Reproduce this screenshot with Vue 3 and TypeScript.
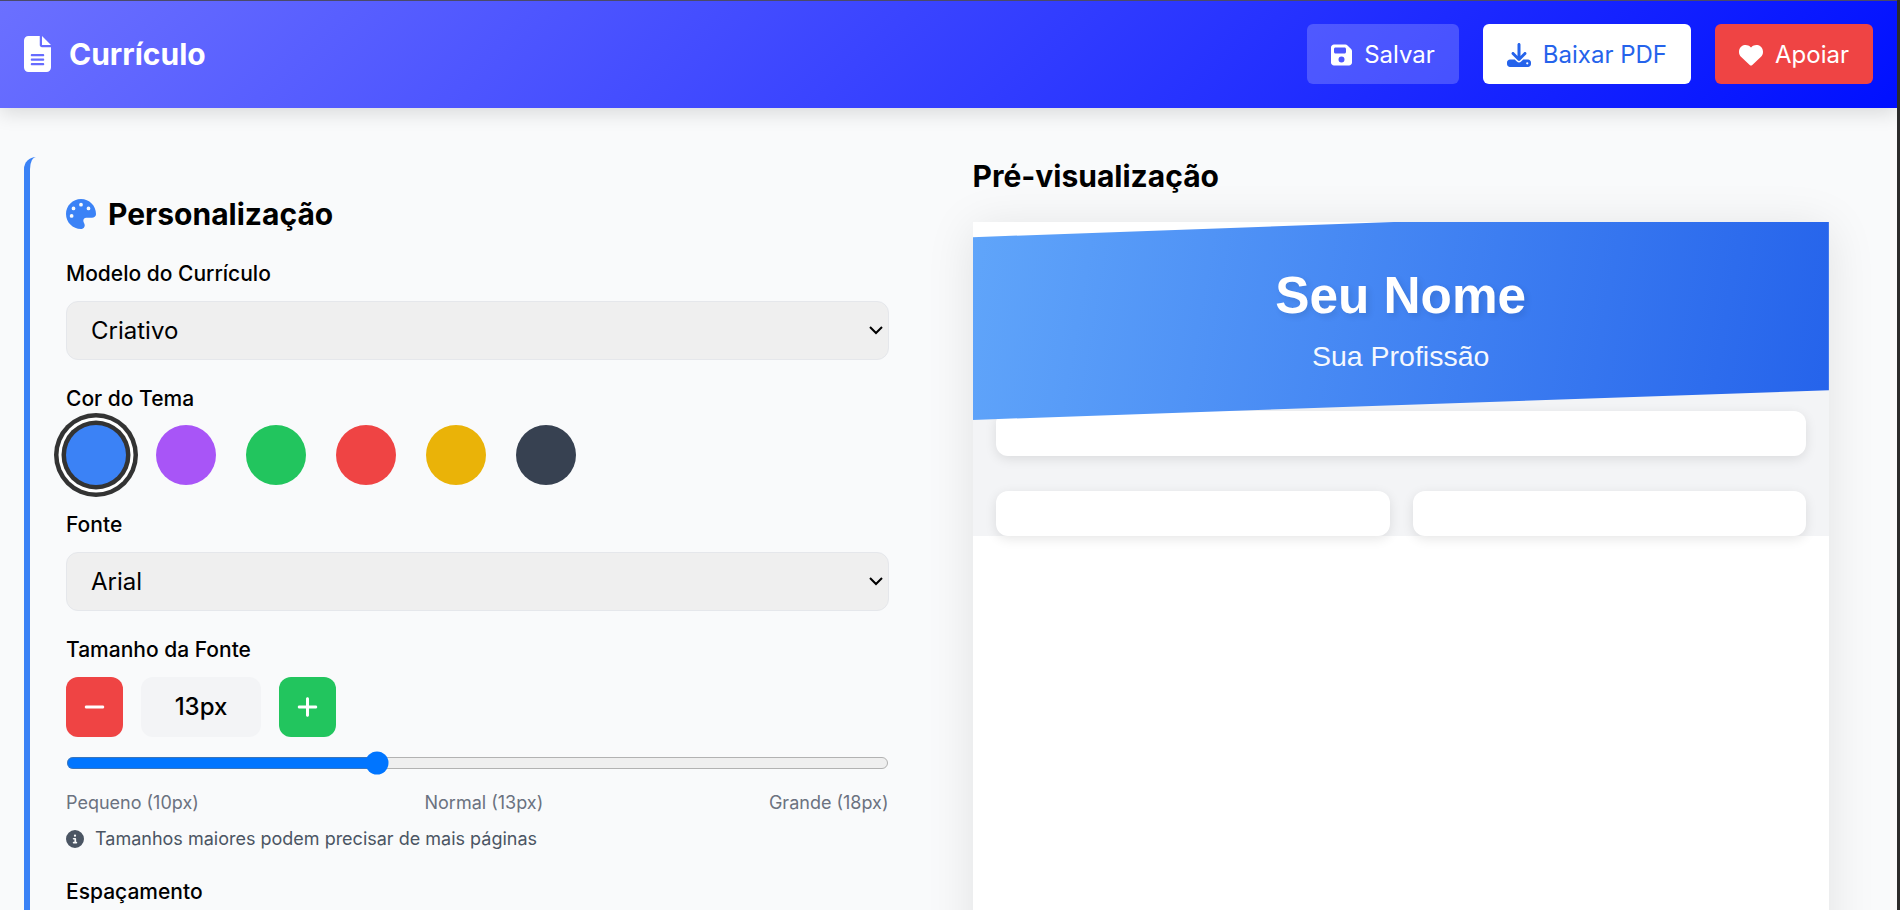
<script setup lang="ts">
import { ref } from 'vue'

const swatches = ['#3b82f6', '#a855f7', '#22c55e', '#ef4444', '#eab308', '#374151']
const selected = ref('#3b82f6')
const size = ref(13)
const modelo = ref('Criativo')
const fonte = ref('Arial')
</script>

<template>
  <div class="frame">
    <div class="page">
      <header class="topbar">
        <div class="brand">
          <svg class="brand-icon" viewBox="0 0 384 512" fill="currentColor"><path d="M64 0C28.7 0 0 28.7 0 64V448c0 35.3 28.7 64 64 64H320c35.3 0 64-28.7 64-64V160H256c-17.7 0-32-14.3-32-32V0H64zM256 0V128H384L256 0zM112 256H272c8.8 0 16 7.2 16 16s-7.2 16-16 16H112c-8.8 0-16-7.2-16-16s7.2-16 16-16zm0 64H272c8.8 0 16 7.2 16 16s-7.2 16-16 16H112c-8.8 0-16-7.2-16-16s7.2-16 16-16zm0 64H272c8.8 0 16 7.2 16 16s-7.2 16-16 16H112c-8.8 0-16-7.2-16-16s7.2-16 16-16z"/></svg>
          <h1 class="brand-title">Currículo</h1>
        </div>
        <div class="actions">
          <button class="btn btn-save">
            <svg class="btn-icon" viewBox="0 0 448 512" fill="currentColor"><path d="M64 32C28.7 32 0 60.7 0 96V416c0 35.3 28.7 64 64 64H384c35.3 0 64-28.7 64-64V173.3c0-17-6.7-33.3-18.7-45.3L352 50.7C340 38.7 323.7 32 306.7 32H64zm0 96c0-17.7 14.3-32 32-32H288c17.7 0 32 14.3 32 32v64c0 17.7-14.3 32-32 32H96c-17.7 0-32-14.3-32-32V128zM224 288a64 64 0 1 1 0 128 64 64 0 1 1 0-128z"/></svg>
            Salvar
          </button>
          <button class="btn btn-pdf">
            <svg class="btn-icon" viewBox="0 0 512 512" fill="currentColor"><path d="M288 32c0-17.7-14.3-32-32-32s-32 14.3-32 32V274.7l-73.4-73.4c-12.5-12.5-32.8-12.5-45.3 0s-12.5 32.8 0 45.3l128 128c12.5 12.5 32.8 12.5 45.3 0l128-128c12.5-12.5 12.5-32.8 0-45.3s-32.8-12.5-45.3 0L288 274.7V32zM64 352c-35.3 0-64 28.7-64 64v32c0 35.3 28.7 64 64 64H448c35.3 0 64-28.7 64-64V416c0-35.3-28.7-64-64-64H346.5l-45.3 45.3c-25 25-65.5 25-90.5 0L165.5 352H64zm368 56a24 24 0 1 1 0 48 24 24 0 1 1 0-48z"/></svg>
            Baixar PDF
          </button>
          <button class="btn btn-support">
            <svg class="btn-icon" viewBox="0 0 512 512" fill="currentColor"><path d="M47.6 300.4L228.3 469.1c7.5 7 17.4 10.9 27.7 10.9s20.2-3.9 27.7-10.9L464.4 300.4c30.4-28.3 47.6-68 47.6-109.5v-5.8c0-69.9-50.5-129.5-119.4-141C347 36.5 300.6 51.4 268 84L256 96 244 84c-32.6-32.6-79-47.5-124.6-39.9C50.5 55.6 0 115.2 0 185.1v5.8c0 41.5 17.2 81.2 47.6 109.5z"/></svg>
            Apoiar
          </button>
        </div>
      </header>

      <main class="content">
        <section class="panel">
          <h2 class="panel-title">
            <svg class="panel-icon" viewBox="0 0 512 512" fill="currentColor"><path d="M512 256c0 .9 0 1.8 0 2.7c-.4 36.5-33.6 61.3-70.1 61.3H344c-26.5 0-48 21.5-48 48c0 3.4 .4 6.7 1 9.9c2.1 10.2 6.5 20 10.8 29.9c6.1 13.8 12.1 27.5 12.1 42c0 31.8-21.6 60.7-53.4 62c-3.5 .1-7 .2-10.6 .2C114.6 512 0 397.4 0 256S114.6 0 256 0S512 114.6 512 256zM128 288a32 32 0 1 0 -64 0 32 32 0 1 0 64 0zm0-96a32 32 0 1 0 0-64 32 32 0 1 0 0 64zM288 96a32 32 0 1 0 -64 0 32 32 0 1 0 64 0zm96 96a32 32 0 1 0 0-64 32 32 0 1 0 0 64z"/></svg>
            Personalização
          </h2>

          <div class="field">
            <label class="label">Modelo do Currículo</label>
            <select v-model="modelo" class="select">
              <option>Criativo</option>
              <option>Moderno</option>
              <option>Clássico</option>
            </select>
          </div>

          <div class="field">
            <label class="label">Cor do Tema</label>
            <div class="swatches">
              <button
                v-for="c in swatches"
                :key="c"
                class="swatch"
                :class="{ active: c === selected }"
                :style="{ backgroundColor: c }"
                @click="selected = c"
              ></button>
            </div>
          </div>

          <div class="field">
            <label class="label">Fonte</label>
            <select v-model="fonte" class="select">
              <option>Arial</option>
              <option>Georgia</option>
              <option>Verdana</option>
            </select>
          </div>

          <div class="field">
            <label class="label">Tamanho da Fonte</label>
            <div class="stepper">
              <button class="step step-minus" @click="size = Math.max(10, size - 1)">
                <svg class="step-icon" viewBox="0 0 448 512" fill="currentColor"><path d="M432 256c0 17.7-14.3 32-32 32L48 288c-17.7 0-32-14.3-32-32s14.3-32 32-32l352 0c17.7 0 32 14.3 32 32z"/></svg>
              </button>
              <div class="step-value">{{ size }}px</div>
              <button class="step step-plus" @click="size = Math.min(18, size + 1)">
                <svg class="step-icon" viewBox="0 0 448 512" fill="currentColor"><path d="M256 80c0-17.7-14.3-32-32-32s-32 14.3-32 32V224H48c-17.7 0-32 14.3-32 32s14.3 32 32 32H192V432c0 17.7 14.3 32 32 32s32-14.3 32-32V288H400c17.7 0 32-14.3 32-32s-14.3-32-32-32H256V80z"/></svg>
              </button>
            </div>
            <input v-model.number="size" class="range" type="range" min="10" max="18" />
            <div class="range-labels">
              <span>Pequeno (10px)</span>
              <span>Normal (13px)</span>
              <span>Grande (18px)</span>
            </div>
            <p class="hint">
              <svg class="hint-icon" viewBox="0 0 512 512" fill="currentColor"><path d="M256 512A256 256 0 1 0 256 0a256 256 0 1 0 0 512zM216 336h24V272H216c-13.3 0-24-10.7-24-24s10.7-24 24-24h48c13.3 0 24 10.7 24 24v88h8c13.3 0 24 10.7 24 24s-10.7 24-24 24H216c-13.3 0-24-10.7-24-24s10.7-24 24-24zm40-208a32 32 0 1 1 0 64 32 32 0 1 1 0-64z"/></svg>
              Tamanhos maiores podem precisar de mais páginas
            </p>
          </div>

          <div class="field">
            <label class="label">Espaçamento</label>
          </div>
        </section>

        <section class="preview-col">
          <h2 class="preview-title">Pré-visualização</h2>
          <div class="sheet">
            <div class="sheet-head">
              <div class="sheet-name">Seu Nome</div>
              <div class="sheet-role">Sua Profissão</div>
            </div>
            <div class="sheet-body">
              <div class="card card-wide"></div>
              <div class="card-row">
                <div class="card"></div>
                <div class="card"></div>
              </div>
            </div>
            <div class="sheet-rest"></div>
          </div>
        </section>
      </main>
    </div>
  </div>
</template>

<style>
html, body { margin: 0; padding: 0; background: #2b2b2b; overflow: hidden; }
</style>

<style scoped>
.frame {
  position: relative;
  width: 1897px;
  height: 910px;
  overflow: hidden;
  background: #f9fafb;
}
.frame::after {
  content: "";
  position: absolute;
  top: 0;
  left: 0;
  right: 0;
  height: 1px;
  background: #4a4a6a;
  z-index: 5;
}
.page {
  zoom: 1.5;
  font-family: Inter, "Noto Sans", sans-serif;
  font-size: 16px;
  line-height: 24px;
  color: #000;
}
.topbar {
  display: flex;
  align-items: center;
  justify-content: space-between;
  padding: 16px 16px 16.33px;
  background: linear-gradient(135deg, #6b70ff 0%, #0010ff 100%);
  box-shadow: 0 4px 12px rgba(0, 0, 0, 0.12);
  color: #fff;
  position: relative;
  z-index: 2;
}
.brand { display: flex; align-items: center; gap: 12px; }
.brand-icon { width: 18px; height: 24px; display: block; }
.brand-title { margin: 0; font-size: 20px; line-height: 28px; font-weight: 700; }
.actions { display: flex; gap: 16px; }
.btn {
  display: flex;
  align-items: center;
  gap: 8px;
  height: 40px;
  padding: 1px 16px 0;
  border: 0;
  border-radius: 4px;
  font-family: inherit;
  font-size: 16px;
  line-height: 24px;
  cursor: pointer;
}
.btn-icon { height: 16px; width: auto; display: block; }
.btn-save { background: rgba(255, 255, 255, 0.2); color: #fff; }
.btn-pdf { background: #fff; color: #2563eb; }
.btn-support { background: #ef4444; color: #fff; }

.content {
  display: grid;
  grid-template-columns: 1fr 1fr;
  gap: 32px;
  padding: 32.33px 16px 0;
}
.panel {
  border-left: 4px solid #3b82f6;
  border-radius: 8px;
  padding: 24px;
  background: #f9fafb;
}
.panel-title {
  display: flex;
  align-items: center;
  gap: 8px;
  margin: 0 0 16px;
  font-size: 20px;
  line-height: 28px;
  font-weight: 700;
}
.panel-icon { width: 20px; height: 20px; color: #3b82f6; display: block; }
.field { margin-bottom: 16px; }
.label {
  display: block;
  margin-bottom: 8px;
  font-size: 14px;
  line-height: 20px;
  font-weight: 500;
}
.select {
  display: block;
  width: 100%;
  height: 39.33px;
  padding: 0 12px;
  border: 1px solid #e5e7eb;
  border-radius: 8px;
  font-family: inherit;
  font-size: 16px;
  color: #000;
}
.swatches { display: flex; gap: 20px; margin-top: -0.6px; padding-bottom: 0.6px; }
.swatch {
  width: 40px;
  height: 40px;
  padding: 0;
  border: 0;
  border-radius: 50%;
  cursor: pointer;
}
.swatch.active {
  box-shadow: 0 0 0 3px #333, 0 0 0 5px #fff, 0 0 0 8px #333;
}
.stepper { display: flex; gap: 12px; margin-bottom: 9.6px; }
.step {
  display: flex;
  align-items: center;
  justify-content: center;
  width: 38px;
  height: 40px;
  padding: 0;
  border: 0;
  border-radius: 8px;
  color: #fff;
  cursor: pointer;
}
.step-icon { width: 14px; height: 16px; display: block; }
.step-minus { background: #ef4444; }
.step-plus { background: #22c55e; }
.step-value {
  width: 80px;
  height: 40px;
  display: flex;
  align-items: center;
  justify-content: center;
  background: #f3f4f6;
  border-radius: 8px;
  font-weight: 500;
}
.range { display: block; width: 100%; margin: 0; }
.range-labels {
  display: flex;
  justify-content: space-between;
  margin-top: 10.5px;
  font-size: 12px;
  line-height: 16px;
  color: #6b7280;
}
.hint {
  display: flex;
  align-items: center;
  gap: 7.33px;
  margin: 8px 0 0;
  padding-bottom: 1.5px;
  font-size: 12px;
  line-height: 16px;
  color: #4b5563;
}
.hint-icon { width: 12px; height: 12px; display: block; }

.preview-title {
  margin: -1.6px 0 16.8px;
  font-size: 20px;
  line-height: 28px;
  font-weight: 700;
}
.sheet {
  width: 95.1%;
  background: #fff;
  box-shadow: 0 4px 30px rgba(0, 0, 0, 0.1);
  font-family: "Liberation Sans", Arial, sans-serif;
  font-size: 13px;
  line-height: normal;
}
.sheet-head {
  position: relative;
  z-index: 1;
  padding: 29.2px 30px 31.07px;
  background: linear-gradient(100deg, #60a5fa 0%, #2563eb 100%);
  color: #fff;
  text-align: center;
  clip-path: polygon(0 7.8%, 50% 0, 100% 0, 100% 85%, 0 100%);
}
.sheet-name {
  font-size: 34.2px;
  font-weight: 700;
  text-shadow: 2px 2px 4px rgba(0, 0, 0, 0.1);
  margin-bottom: 10.5px;
}
.sheet-role { font-size: 19px; opacity: 0.95; }
.sheet-body {
  margin-top: -26px;
  padding: 19.8px 15px 0 15.6px;
  background: #f3f4f6;
}
.card {
  height: 30px;
  background: #fff;
  border-radius: 8px;
  box-shadow: 0 2px 8px rgba(0, 0, 0, 0.1);
}
.card-wide { margin-bottom: 23.6px; }
.card-row { display: grid; grid-template-columns: 1fr 1fr; gap: 15.3px; }
.sheet-rest { height: 400px; }
</style>
